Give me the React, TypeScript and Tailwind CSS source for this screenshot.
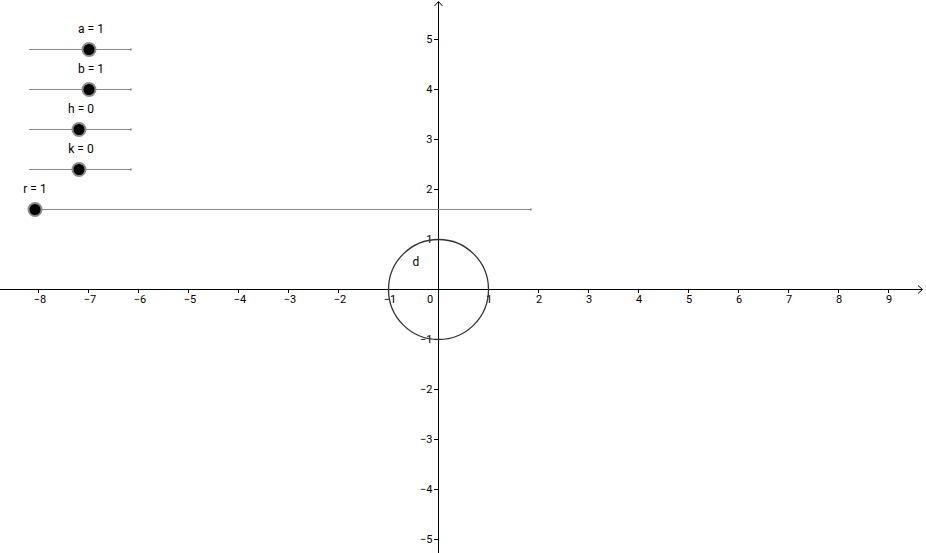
import React from "react";

const ox = 438;
const oy = 289;
const u = 50;

const xs = [-8, -7, -6, -5, -4, -3, -2, -1, 1, 2, 3, 4, 5, 6, 7, 8, 9];
const ys = [-5, -4, -3, -2, -1, 1, 2, 3, 4, 5];

const fmt = (n: number) => (n < 0 ? `\u2212${-n}` : `${n}`);

const sliders = [
  { label: "a = 1", y: 49, x1: 29, x2: 131, px: 89, lx: 91 },
  { label: "b = 1", y: 89, x1: 29, x2: 131, px: 89, lx: 91 },
  { label: "h = 0", y: 129, x1: 29, x2: 131, px: 79, lx: 81 },
  { label: "k = 0", y: 169, x1: 29, x2: 131, px: 79, lx: 81 },
  { label: "r = 1", y: 209, x1: 35, x2: 531, px: 35, lx: 35 },
];

export default function App() {
  return (
    <div className="w-[926px] h-[553px] bg-white overflow-hidden">
      <svg width={926} height={553} viewBox="0 0 926 553" className="block" style={{ fontFamily: "Roboto, 'Liberation Sans', sans-serif" }}>
        {/* axes */}
        <line x1={0} y1={oy + 0.5} x2={922} y2={oy + 0.5} stroke="#000" strokeWidth={1} />
        <line x1={ox + 0.5} y1={2} x2={ox + 0.5} y2={553} stroke="#000" strokeWidth={1} />
        <path d={`M ${ox - 3.5} 6 L ${ox + 0.5} 1.5 L ${ox + 4.5} 6`} fill="none" stroke="#000" strokeWidth={1} />
        <path d={`M 918 ${oy - 3.5} L 922.5 ${oy + 0.5} L 918 ${oy + 4.5}`} fill="none" stroke="#000" strokeWidth={1} />

        {xs.map((n) => (
          <g key={`x${n}`}>
            <line x1={ox + n * u + 0.5} y1={oy} x2={ox + n * u + 0.5} y2={oy + 4} stroke="#000" />
            <text x={ox + n * u + (n < 0 ? 2 : 1)} y={303} fontSize={11} textAnchor="middle" fill="#000">
              {fmt(n)}
            </text>
          </g>
        ))}
        <text x={430} y={303} fontSize={11} textAnchor="middle" fill="#000">0</text>

        {ys.map((n) => (
          <g key={`y${n}`}>
            <line x1={ox - 4} y1={oy - n * u + 0.5} x2={ox} y2={oy - n * u + 0.5} stroke="#000" />
            <text x={432.5} y={oy - n * u + 4} fontSize={11} textAnchor="end" fill="#000">
              {fmt(n)}
            </text>
          </g>
        ))}

        {/* circle d */}
        <circle cx={ox + 0.5} cy={oy + 0.5} r={u} fill="none" stroke="#333" strokeWidth={1.3} />
        <text x={416} y={266} fontSize={12} textAnchor="middle" fill="#000">d</text>

        {/* sliders */}
        {sliders.map((s) => (
          <g key={s.label}>
            <line x1={s.x1} y1={s.y + 0.5} x2={s.x2} y2={s.y + 0.5} stroke="#888" strokeWidth={1} />
            <line x1={s.x2} y1={s.y - 1} x2={s.x2} y2={s.y + 2} stroke="#888" strokeWidth={1} />
            <circle cx={s.px} cy={s.y + 0.5} r={6.5} fill="#000" stroke="#8a8a8a" strokeWidth={2} />
            <text x={s.lx} y={s.y - 16} fontSize={12} textAnchor="middle" fill="#000">
              {s.label}
            </text>
          </g>
        ))}
      </svg>
    </div>
  );
}
